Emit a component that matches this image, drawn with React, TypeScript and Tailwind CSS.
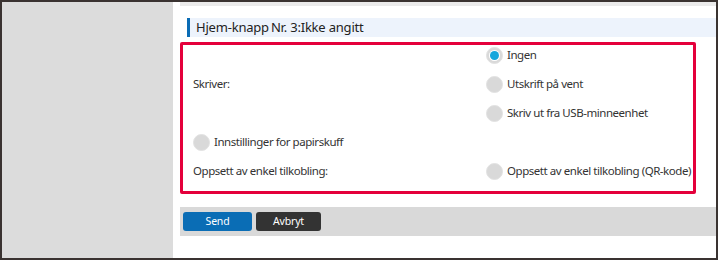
import React from 'react';

const Radio: React.FC<{ checked?: boolean; label: string }> = ({ checked, label }) => (
  <div className="flex items-center h-5 shrink-0 whitespace-nowrap">
    <span className="w-[17px] h-[17px] rounded-full bg-[#d9d9d9] border border-[#e2e2e2] flex items-center justify-center shrink-0">
      {checked && (
        <span className="w-[11px] h-[11px] rounded-full bg-white flex items-center justify-center">
          <span className="w-[9px] h-[9px] rounded-full bg-[#15a6dc]" />
        </span>
      )}
    </span>
    <span className="ml-[4px] text-[11.5px] tracking-[-0.45px] text-[#333]">{label}</span>
  </div>
);

export default function App() {
  return (
    <div
      className="w-[718px] h-[260px] border-2 border-[#3a3331] flex bg-white"
      style={{ fontFamily: '"Noto Sans", "Open Sans", sans-serif' }}
    >
      {/* Side panel */}
      <div className="w-[171px] bg-[#dcdcdc]" />

      {/* Main */}
      <div className="flex-1 pl-[7px] flex flex-col">
        <div className="h-[4px] bg-[#ebebeb]" />

        {/* Heading */}
        <div className="mt-[12px] ml-[7px] h-[19px] bg-[#edf3fc] border-l-[3px] border-[#0a6cb5] flex items-center pl-[6px]">
          <span className="text-[13px] tracking-[-0.2px] text-[#222] leading-none whitespace-nowrap">
            Hjem-knapp<span className="ml-[2px]">Nr. 3:Ikke angitt</span>
          </span>
        </div>

        {/* Highlighted settings */}
        <div className="mt-[5px] w-[516px] border-[3px] border-[#e4003b] rounded-[2px] flex flex-col gap-[9px] pb-[10px] pl-[10px]">
          <div className="flex">
            <div className="w-[293px] shrink-0 flex items-center text-[11.5px] tracking-[-0.45px] text-[#333]">Skriver:</div>
            <div className="flex flex-col gap-[9px]">
              <Radio checked label="Ingen" />
              <Radio label="Utskrift på vent" />
              <Radio label="Skriv ut fra USB-minneenhet" />
            </div>
          </div>
          <Radio label="Innstillinger for papirskuff" />
          <div className="flex">
            <div className="w-[293px] shrink-0 flex items-center text-[11.5px] tracking-[-0.45px] text-[#333]">Oppsett av enkel tilkobling:</div>
            <Radio label="Oppsett av enkel tilkobling (QR-kode)" />
          </div>
        </div>

        {/* Buttons */}
        <div className="mt-[13px] h-[29px] bg-[#d9d9d9] flex items-center pl-[3px] gap-[4px]">
          <button className="w-[69px] h-[19px] rounded-[3px] bg-[#0a6db5] text-white text-[10.5px] tracking-[-0.2px] leading-none">
            Send
          </button>
          <button className="w-[65px] h-[19px] rounded-[3px] bg-[#333] text-white text-[10.5px] tracking-[-0.2px] leading-none">
            Avbryt
          </button>
        </div>
      </div>
    </div>
  );
}
